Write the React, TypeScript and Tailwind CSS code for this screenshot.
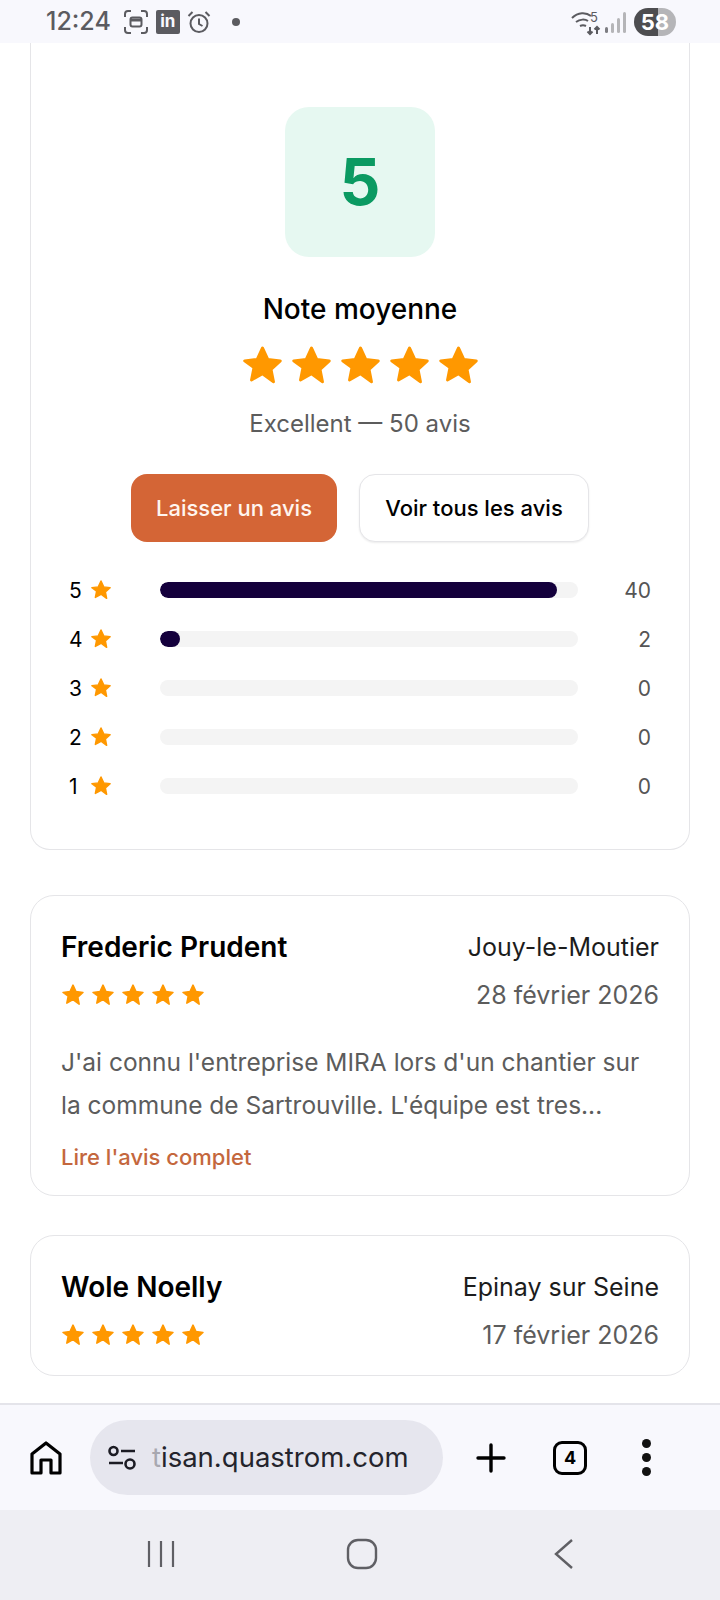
const FONT = "font-['Inter','Noto_Sans',sans-serif]";

function Star({ className }: { className: string }) {
  return (
    <svg className={className} viewBox="0 0 24 24" fill="#ff9800" stroke="#ff9800" strokeWidth="1.6" strokeLinejoin="round">
      <path d="M12 2.2l2.95 6.4 7 .82-5.18 4.76 1.38 6.9L12 16.65 5.85 20.08l1.38-6.9L2.05 9.42l7-.82z" />
    </svg>
  );
}

function StatusBar() {
  return (
    <div className="flex h-[43px] shrink-0 items-center bg-[#f8f8fd] pl-[46px] pr-[44px] text-[#5b5b60]">
      <span className="text-[25px] font-medium leading-none">12:24</span>
      <svg className="ml-[13px] h-[24px] w-[24px]" viewBox="0 0 24 24" fill="none" stroke="currentColor" strokeWidth="2">
        <path d="M1 7V4a3 3 0 013-3h3M17 1h3a3 3 0 013 3v3M23 17v3a3 3 0 01-3 3h-3M7 23H4a3 3 0 01-3-3v-3" />
        <rect x="6.5" y="7.5" width="11" height="9" rx="2" />
        <path d="M7 10h10" strokeWidth="3" />
      </svg>
      <div className="ml-[8px] flex h-[24px] w-[24px] items-center justify-center rounded-[2px] bg-[#5b5b60] text-[17px] font-bold leading-none text-[#f8f8fd]">
        in
      </div>
      <svg className="ml-[7px] h-[24px] w-[24px]" viewBox="0 0 24 24" fill="none" stroke="currentColor" strokeWidth="2">
        <circle cx="12" cy="13.5" r="8.5" />
        <path d="M12 8.5v5.5l3.5 2M1.5 6l4-4M22.5 6l-4-4" />
      </svg>
      <span className="ml-[21px] h-[8px] w-[8px] rounded-full bg-[#5b5b60]" />
      <svg className="ml-auto h-[28px] w-[30px]" viewBox="0 0 30 28" fill="none" stroke="currentColor" strokeWidth="2">
        <path d="M1 10c6-6 14-6 19-2M5 14c4-3 9-3 12-1M9 18c2-1 4-1 6 0" />
        <path d="M19 19v7M16.5 23.5l2.5 2.5 2.5-2.5M26 26v-7M23.5 21.5l2.5-2.5 2.5 2.5" />
      </svg>
      <span className="absolute left-[590px] top-[11px] text-[13px] leading-none">5</span>
      <svg className="ml-[3px] h-[26px] w-[24px] text-[#b5b5b8]" viewBox="0 0 24 26" fill="currentColor">
        <rect x="1" y="18" width="3" height="6" rx="1.5" fill="#7d7d82" />
        <rect x="7" y="14" width="3" height="10" rx="1.5" />
        <rect x="13" y="9" width="3" height="15" rx="1.5" />
        <rect x="19" y="3" width="3" height="21" rx="1.5" />
      </svg>
      <div className="ml-[6px] flex h-[28px] w-[42px] items-center justify-center rounded-full bg-[linear-gradient(90deg,#4d4d50_56%,#b5b5b8_56%)] text-[22px] font-bold leading-none text-white">
        58
      </div>
    </div>
  );
}

const BARS = [
  { label: 5, width: 95, count: 40 },
  { label: 4, width: 4.8, count: 2 },
  { label: 3, width: 0, count: 0 },
  { label: 2, width: 0, count: 0 },
  { label: 1, width: 0, count: 0 },
];

function SummaryCard() {
  return (
    <div className="flex h-[807px] flex-col items-center rounded-b-[20px] border border-t-0 border-[#e5e5e8] bg-white px-[38px] pt-[64px]">
      <div className="flex h-[150px] w-[150px] items-center justify-center rounded-[24px] bg-[#e6f8f1] text-[64px] font-bold leading-none text-[#0b9a62]">
        5
      </div>
      <h2 className="mt-[33px] text-[28px] font-medium leading-[38px] text-black">Note moyenne</h2>
      <div className="mt-[16px] flex h-[44px] gap-[6px]">
        {[0, 1, 2, 3, 4].map((i) => (
          <Star key={i} className="h-[43px] w-[43px]" />
        ))}
      </div>
      <p className="mt-[20px] text-[24px] leading-[32px] text-[#5c5c5c]">Excellent — 50 avis</p>
      <div className="mt-[34px] flex gap-[22px]">
        <button className="h-[68px] w-[206px] rounded-[16px] bg-[#d46536] text-[22px] font-medium text-[#fff5ef]">
          Laisser un avis
        </button>
        <button className="h-[68px] w-[230px] rounded-[16px] border border-[#e5e5e8] bg-white text-[22px] font-medium text-black shadow-[0_1px_2px_rgba(0,0,0,0.08)]">
          Voir tous les avis
        </button>
      </div>
      <div className="mt-[36px] flex w-full flex-col gap-[25px]">
        {BARS.map((bar) => (
          <div key={bar.label} className="flex h-[24px] items-center">
            <span className="w-[13px] text-[21px] leading-none text-black">{bar.label}</span>
            <Star className="ml-[8px] h-[22px] w-[22px]" />
            <div className="ml-[48px] h-[16px] w-[418px] overflow-hidden rounded-full bg-[#f4f4f4]">
              <div className="h-full rounded-full bg-[#14003c]" style={{ width: `${bar.width}%` }} />
            </div>
            <span className="ml-auto text-[21px] leading-none text-[#555]">{bar.count}</span>
          </div>
        ))}
      </div>
    </div>
  );
}

function ReviewCard({ name, city, date, text, link }: { name: string; city: string; date: string; text?: string[]; link?: string }) {
  return (
    <div className="rounded-[24px] border border-[#e5e5e8] bg-white px-[30px] pb-[23px] pt-[32px]">
      <div className="flex items-center justify-between">
        <span className="text-[28px] font-semibold leading-[38px] text-black">{name}</span>
        <span className="text-[25px] leading-[38px] text-[#1c1c1c]">{city}</span>
      </div>
      <div className="mt-[12px] flex items-center justify-between">
        <div className="flex gap-[6px]">
          {[0, 1, 2, 3, 4].map((i) => (
            <Star key={i} className="h-[24px] w-[24px]" />
          ))}
        </div>
        <span className="text-[25px] leading-[34px] text-[#5c5c5c]">{date}</span>
      </div>
      {text && (
        <div className="mt-[29px] text-[24.5px] leading-[43px] text-[#5c5c5c]">
          {text.map((line) => (
            <p key={line} className="whitespace-nowrap">{line}</p>
          ))}
        </div>
      )}
      {link && <p className="mt-[15px] text-[22px] font-medium leading-[30px] text-[#c4673d]">{link}</p>}
    </div>
  );
}

function BrowserBar() {
  return (
    <div className="relative z-10 flex h-[107px] shrink-0 items-center border-t-2 border-[#e4e4ea] bg-[#f8f8fd] pl-[30px] text-black">
      <svg className="h-[34px] w-[32px]" viewBox="0 0 32 34" fill="none" stroke="currentColor" strokeWidth="3.2" strokeLinejoin="round">
        <path d="M2 32V13L16 2l14 11v19h-9V19H11v13z" />
      </svg>
      <div className="ml-[28px] flex h-[75px] w-[353px] items-center overflow-hidden rounded-full bg-[#e6e6ee] pl-[17px]">
        <svg className="h-[26px] w-[30px] shrink-0" viewBox="0 0 30 26" fill="none" stroke="#1c1c24" strokeWidth="2.6">
          <circle cx="6.5" cy="6" r="4" />
          <path d="M14 6h14M2 18h14" />
          <circle cx="23" cy="19" r="4.5" />
        </svg>
        <span className="ml-[15px] whitespace-nowrap text-[27.5px] leading-none text-[#24242c]">
          <span className="text-[#a8a8b0]">t</span>isan.quastrom.com
        </span>
      </div>
      <svg className="ml-[33px] h-[30px] w-[30px]" viewBox="0 0 30 30" fill="none" stroke="currentColor" strokeWidth="3.4" strokeLinecap="round">
        <path d="M15 2v26M2 15h26" />
      </svg>
      <div className="ml-[47px] flex h-[34px] w-[34px] items-center justify-center rounded-[9px] border-[3px] border-black text-[18px] font-bold leading-none">
        4
      </div>
      <div className="ml-[55px] flex flex-col gap-[5px]">
        <span className="h-[9px] w-[9px] rounded-full bg-[#111]" />
        <span className="h-[9px] w-[9px] rounded-full bg-[#111]" />
        <span className="h-[9px] w-[9px] rounded-full bg-[#111]" />
      </div>
    </div>
  );
}

function NavBar() {
  return (
    <div className="flex h-[90px] shrink-0 items-center bg-[#eeeef3] pb-[2px] text-[#5f5f64]">
      <svg className="ml-[146px] h-[30px] w-[30px]" viewBox="0 0 30 30" fill="none" stroke="currentColor" strokeWidth="2.2">
        <path d="M3 2v26M15 2v26M27 2v26" />
      </svg>
      <svg className="ml-[170px] h-[32px] w-[32px]" viewBox="0 0 32 32" fill="none" stroke="currentColor" strokeWidth="2.4">
        <rect x="2" y="2" width="28" height="28" rx="10" />
      </svg>
      <svg className="ml-[175px] h-[32px] w-[22px]" viewBox="0 0 22 32" fill="none" stroke="currentColor" strokeWidth="2.4">
        <path d="M19 2L3 16l16 14" />
      </svg>
    </div>
  );
}

export default function App() {
  return (
    <div className={`${FONT} relative flex h-[1600px] w-[720px] flex-col overflow-hidden bg-white`}>
      <StatusBar />
      <main className="flex min-h-0 flex-1 flex-col gap-[39px] overflow-hidden px-[30px]">
        <div className="flex flex-col gap-[45px]">
          <SummaryCard />
          <ReviewCard
            name="Frederic Prudent"
            city="Jouy-le-Moutier"
            date="28 février 2026"
            text={["J'ai connu l'entreprise MIRA lors d'un chantier sur", "la commune de Sartrouville. L'équipe est tres..."]}
            link="Lire l'avis complet"
          />
        </div>
        <div className="h-[200px] shrink-0">
          <ReviewCard name="Wole Noelly" city="Epinay sur Seine" date="17 février 2026" />
        </div>
      </main>
      <BrowserBar />
      <NavBar />
    </div>
  );
}
